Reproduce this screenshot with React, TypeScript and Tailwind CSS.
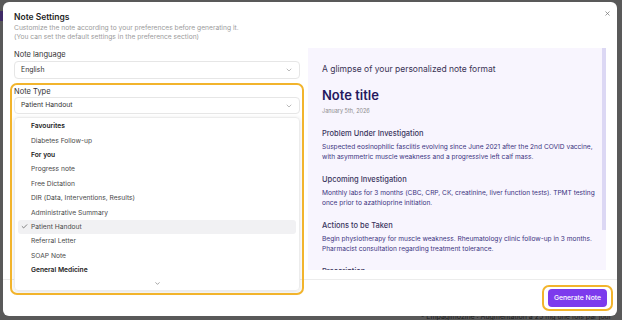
import { Check, ChevronDown, X } from "lucide-react";

const items: { label: string; header?: boolean; selected?: boolean }[] = [
  { label: "Favourites", header: true },
  { label: "Diabetes Follow-up" },
  { label: "For you", header: true },
  { label: "Progress note" },
  { label: "Free Dictation" },
  { label: "DIR (Data, Interventions, Results)" },
  { label: "Administrative Summary" },
  { label: "Patient Handout", selected: true },
  { label: "Referral Letter" },
  { label: "SOAP Note" },
  { label: "General Medicine", header: true },
];

const sections = [
  {
    title: "Problem Under Investigation",
    body: "Suspected eosinophilic fasciitis evolving since June 2021 after the 2nd COVID vaccine, with asymmetric muscle weakness and a progressive left calf mass.",
  },
  {
    title: "Upcoming Investigation",
    body: "Monthly labs for 3 months (CBC, CRP, CK, creatinine, liver function tests). TPMT testing once prior to azathioprine initiation.",
  },
  {
    title: "Actions to be Taken",
    body: "Begin physiotherapy for muscle weakness. Rheumatology clinic follow-up in 3 months. Pharmacist consultation regarding treatment tolerance.",
  },
  {
    title: "Prescription",
    body: "Azathioprine 50 mg once daily, to be increased after review.",
  },
];

export default function App() {
  return (
    <div className="relative w-[622px] h-[320px] overflow-hidden bg-[#595959] font-['Inter',sans-serif]">
      {/* dimmed page behind the dialog */}
      <div className="absolute left-0 top-[11px] w-[4px] h-[10px] bg-[#3e2a66]"></div>
      <div className="absolute left-[421px] top-[312px] text-[7px] text-[#1e1e1e] whitespace-nowrap">
        - Empagliflozine : Augmentation à 25 mg une fois par jour
      </div>

      <div className="absolute left-[3px] top-[2px] w-[614px] h-[314px] bg-white rounded-[6px] flex flex-col">
        <button className="absolute right-[6px] top-[8px] text-[#777]">
          <X size={7} strokeWidth={2.5} />
        </button>

        <div className="shrink-0 px-[11px] pt-[8px]">
          <h2 className="text-[8.5px] leading-[14px] font-semibold text-[#1f1f1f]">Note Settings</h2>
          <p className="text-[6.7px] leading-[9px] text-[#9b9b9b]">
            Customize the note according to your preferences before generating it.
            <br />
            (You can set the default settings in the preference section)
          </p>
        </div>

        <div className="shrink-0 flex gap-[8px] px-[11px] mt-[6px] h-[231px]">
          <div className="relative z-10 w-[286px] shrink-0">
            <label className="block text-[7.5px] leading-[10px] mt-[2px] text-[#333]">Note language</label>
            <div className="mt-[1px] h-[18px] border border-[#e6e6e6] rounded-[4px] flex items-center justify-between px-[6px]">
              <span className="text-[6.9px] text-[#333]">English</span>
              <ChevronDown size={8} className="text-[#999]" />
            </div>

            <div className="mt-[8px] rounded-[3px] outline-2 outline-[#f2b42c] outline-offset-[2px] bg-white">
              <label className="block text-[7.5px] leading-[9px] text-[#333]">Note Type</label>
              <div className="mt-[1px] h-[17px] border border-[#e6e6e6] rounded-[4px] flex items-center justify-between px-[6px]">
                <span className="text-[6.8px] text-[#333]">Patient Handout</span>
                <ChevronDown size={8} className="text-[#999]" />
              </div>
              <div className="mt-[3px] border border-[#ececec] rounded-[4px] shadow-[0_1px_4px_rgba(0,0,0,0.12)] pt-[1px] px-[3px]">
                {items.map((it) => (
                  <div
                    key={it.label}
                    className={`h-[14.4px] flex items-center rounded-[3px] ${it.selected ? "bg-[#f1f1f3]" : ""}`}
                  >
                    <span className="w-[13px] flex justify-center">
                      {it.selected && <Check size={7} strokeWidth={2.5} className="text-[#555]" />}
                    </span>
                    <span
                      className={`text-[6.7px] whitespace-nowrap ${
                        it.header ? "font-semibold text-[#222]" : "text-[#4a4a4a]"
                      }`}
                    >
                      {it.label}
                    </span>
                  </div>
                ))}
                <div className="h-[13px] flex items-center justify-center">
                  <ChevronDown size={7} className="text-[#666]" />
                </div>
              </div>
            </div>
          </div>

          <div className="relative w-[299px] h-[222px] bg-[#f8f5fe] overflow-hidden">
            <div className="absolute right-0 top-0 w-[4px] h-[182px] bg-[#dcd8f4]"></div>
            <div className="pl-[14px] pr-[8px] pt-[15px]">
              <p className="text-[8.5px] leading-[12px] text-[#3a3355]">A glimpse of your personalized note format</p>
              <h1 className="mt-[11px] text-[13px] leading-[18px] font-semibold text-[#25195e]">Note title</h1>
              <p className="mt-[3px] text-[5.5px] leading-[8px] text-[#8a8a8a]">January 5th, 2026</p>
              {sections.map((s, i) => (
                <div key={s.title} className={i === 0 ? "mt-[13px]" : "mt-[12px]"}>
                  <h3 className="text-[7.5px] leading-[12px] font-medium text-[#3b3560]">{s.title}</h3>
                  <p className="mt-[2px] text-[6.6px] leading-[10px] text-[#3b3380]">{s.body}</p>
                </div>
              ))}
            </div>
          </div>
        </div>

        <div className="shrink-0 h-[37px] border-t border-[#ececec] flex items-center justify-end pr-[8px]">
          <div className="flex px-[2px] rounded-[3px] outline-2 outline-[#f2b42c] outline-offset-[2px]">
            <button className="h-[18px] w-[59px] rounded-[4px] bg-[#7c3aed] text-white text-[6.8px] font-medium">
              Generate Note
            </button>
          </div>
        </div>
      </div>
    </div>
  );
}
